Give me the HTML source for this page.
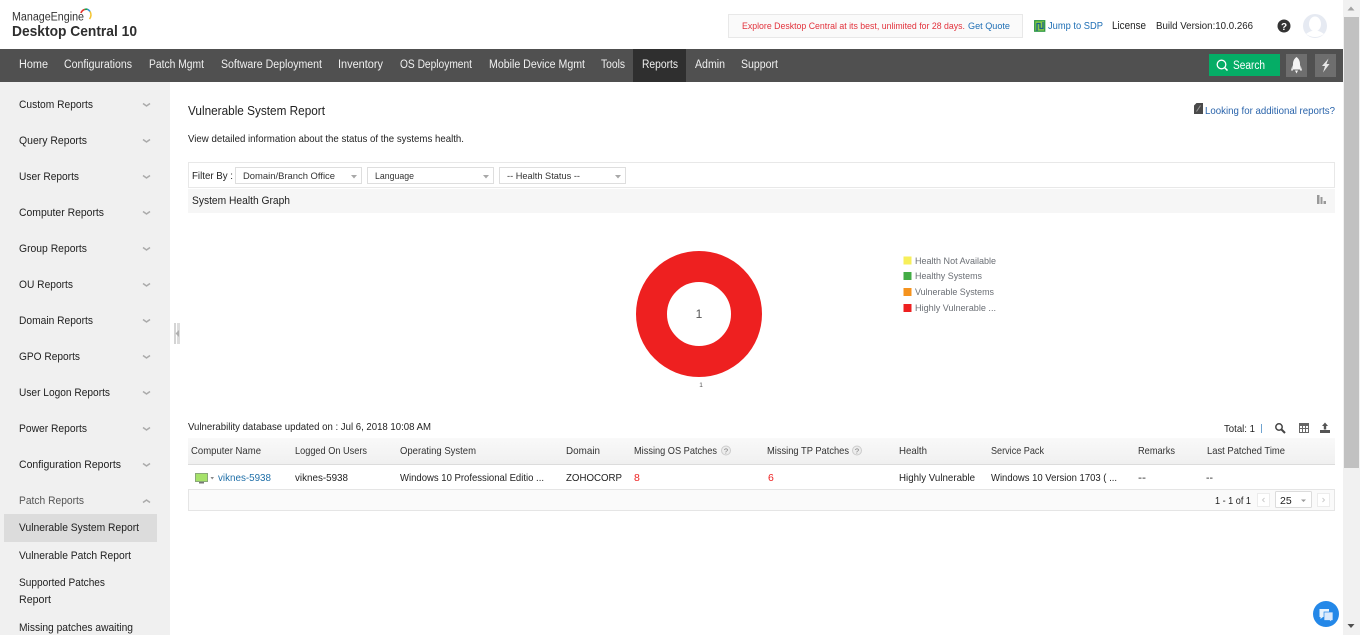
<!DOCTYPE html>
<html lang="en"><head><meta charset="utf-8"><title>Vulnerable System Report</title>
<style>
html,body{margin:0;padding:0;width:1360px;height:635px;overflow:hidden;background:#fff}
svg{display:block;position:absolute;left:0;top:0}
text{font-family:"Liberation Sans",sans-serif;font-size:11px;fill:#222;white-space:pre}
.n text{fill:#f0f0f0;font-size:11.5px}
.s text{fill:#222;font-size:11px}
.h text{fill:#333;font-size:10.5px}
.r text{fill:#222;font-size:10.5px}
.l text{fill:#6b6f75;font-size:9px}
.f text{fill:#333;font-size:9.5px}
.c path{fill:none;stroke:#aaa;stroke-width:1.5}
</style></head><body>
<svg width="1360" height="635" viewBox="0 0 1360 635" xmlns="http://www.w3.org/2000/svg">
<defs><linearGradient id="g" x1="0" y1="0" x2="0" y2="1"><stop offset="0" stop-color="#f9f9f9"/><stop offset="1" stop-color="#f0f0f0"/></linearGradient></defs>
<rect width="1360" height="635" fill="#fff"/>

<!-- header -->
<text x="12" y="20.5" textLength="72" lengthAdjust="spacingAndGlyphs" style="font-size:11.5px;fill:#333">ManageEngine</text>
<g fill="none" stroke-width="1.6">
<path d="M81 13A5.500 5.500 0 0 1 84.500 9.500" stroke="#e5322d"/>
<path d="M84.500 9.500A6 6 0 0 1 87.500 9.300" stroke="#1f9e4a"/>
<path d="M87.500 9.300A6 6 0 0 1 90 11.500" stroke="#2a8fd8"/>
<path d="M90 11.500A6.500 6.500 0 0 1 89.500 19" stroke="#f4c430"/>
</g>
<text x="12" y="36" textLength="125" lengthAdjust="spacingAndGlyphs" style="font-size:15px;font-weight:bold;fill:#2e2e2e">Desktop Central 10</text>

<rect x="728.500" y="14.500" width="294" height="23" fill="#fafafa" stroke="#e8e8e8"/>
<text x="742" y="29" textLength="223" lengthAdjust="spacingAndGlyphs" style="font-size:9.500px;fill:#e2323c">Explore Desktop Central at its best, unlimited for 28 days.</text>
<text x="968" y="29" textLength="42" lengthAdjust="spacingAndGlyphs" style="font-size:9.500px;fill:#1f6fb5">Get Quote</text>

<g fill="none" stroke-width="1.300"><rect x="1034.700" y="20.700" width="10" height="10.500" fill="#8ccc45" stroke="#2f9a46"/><path d="M1037 31V23.500H1040V28.500H1043V22" stroke="#14618c"/></g>
<text x="1048" y="29" textLength="55" lengthAdjust="spacingAndGlyphs" style="font-size:10.500px;fill:#1f6fb5">Jump to SDP</text>
<text x="1112" y="29" textLength="34" lengthAdjust="spacingAndGlyphs" style="font-size:11px;fill:#222">License</text>
<text x="1156" y="29" textLength="97" lengthAdjust="spacingAndGlyphs" style="font-size:10.500px;fill:#222">Build Version:10.0.266</text>
<circle cx="1284" cy="26" r="6.500" fill="#333"/>
<text x="1284" y="30" text-anchor="middle" style="font-size:10px;font-weight:bold;fill:#fff">?</text>
<circle cx="1315" cy="26" r="12" fill="#e6eaf2"/>
<ellipse cx="1315" cy="24" rx="6" ry="7.500" fill="#fff"/>
<path d="M1306 34Q1315 27 1324 34Q1315 40 1306 34Z" fill="#fff"/>

<!-- nav -->
<rect x="0" y="49" width="1343" height="33" fill="#505050"/>
<rect x="633" y="49" width="53" height="33" fill="#2f2f2f"/>
<g class="n">
<text x="19" y="68" textLength="29" lengthAdjust="spacingAndGlyphs">Home</text>
<text x="64" y="68" textLength="68" lengthAdjust="spacingAndGlyphs">Configurations</text>
<text x="149" y="68" textLength="55" lengthAdjust="spacingAndGlyphs">Patch Mgmt</text>
<text x="221" y="68" textLength="101" lengthAdjust="spacingAndGlyphs">Software Deployment</text>
<text x="338" y="68" textLength="45" lengthAdjust="spacingAndGlyphs">Inventory</text>
<text x="400" y="68" textLength="72" lengthAdjust="spacingAndGlyphs">OS Deployment</text>
<text x="489" y="68" textLength="96" lengthAdjust="spacingAndGlyphs">Mobile Device Mgmt</text>
<text x="601" y="68" textLength="24" lengthAdjust="spacingAndGlyphs">Tools</text>
<text x="642" y="68" textLength="36" lengthAdjust="spacingAndGlyphs">Reports</text>
<text x="695" y="68" textLength="30" lengthAdjust="spacingAndGlyphs">Admin</text>
<text x="741" y="68" textLength="37" lengthAdjust="spacingAndGlyphs">Support</text>
</g>
<rect x="1209" y="54" width="71" height="22" fill="#05ad66"/>
<circle cx="1221.500" cy="64.500" r="4.300" fill="none" stroke="#fff" stroke-width="1.300"/>
<path d="M1224.500 67.500L1227.500 70.500" stroke="#fff" stroke-width="1.500"/>
<text x="1233" y="69" textLength="32" lengthAdjust="spacingAndGlyphs" style="font-size:11.500px;fill:#fff">Search</text>
<rect x="1286" y="54" width="21" height="23" fill="#6e6e6e"/>
<path d="M1296.500 57C1299.200 59 1300 61.500 1300 64V69.500H1293V64C1293 61.500 1293.800 59 1296.500 57ZM1292.500 65L1291 70.500H1293ZM1300.500 65L1302 70.500H1300ZM1295 70.500H1298L1296.500 73.500Z" fill="#f4f4f4"/>
<rect x="1315" y="54" width="21" height="23" fill="#6e6e6e"/>
<path d="M1328.500 58.500L1322 66H1325L1323 72.500L1329.500 64H1326.500Z" fill="#e8e8e8"/>

<!-- sidebar -->
<rect x="0" y="82" width="170" height="553" fill="#f0f0f0"/>
<rect x="4" y="514" width="153" height="28" fill="#dcdcdc"/>
<g class="s">
<text x="19" y="108" textLength="74" lengthAdjust="spacingAndGlyphs">Custom Reports</text>
<text x="19" y="144" textLength="68" lengthAdjust="spacingAndGlyphs">Query Reports</text>
<text x="19" y="180" textLength="60" lengthAdjust="spacingAndGlyphs">User Reports</text>
<text x="19" y="216" textLength="85" lengthAdjust="spacingAndGlyphs">Computer Reports</text>
<text x="19" y="252" textLength="68" lengthAdjust="spacingAndGlyphs">Group Reports</text>
<text x="19" y="288" textLength="54" lengthAdjust="spacingAndGlyphs">OU Reports</text>
<text x="19" y="324" textLength="74" lengthAdjust="spacingAndGlyphs">Domain Reports</text>
<text x="19" y="360" textLength="61" lengthAdjust="spacingAndGlyphs">GPO Reports</text>
<text x="19" y="396" textLength="91" lengthAdjust="spacingAndGlyphs">User Logon Reports</text>
<text x="19" y="432" textLength="68" lengthAdjust="spacingAndGlyphs">Power Reports</text>
<text x="19" y="468" textLength="102" lengthAdjust="spacingAndGlyphs">Configuration Reports</text>
<text x="19" y="504" textLength="65" lengthAdjust="spacingAndGlyphs" style="fill:#555">Patch Reports</text>
<text x="19" y="531" textLength="120" lengthAdjust="spacingAndGlyphs">Vulnerable System Report</text>
<text x="19" y="559" textLength="112" lengthAdjust="spacingAndGlyphs">Vulnerable Patch Report</text>
<text x="19" y="586" textLength="86" lengthAdjust="spacingAndGlyphs">Supported Patches</text>
<text x="19" y="603" textLength="32" lengthAdjust="spacingAndGlyphs">Report</text>
<text x="19" y="631" textLength="114" lengthAdjust="spacingAndGlyphs">Missing patches awaiting</text>
</g>
<g class="c">
<path d="M143 103.500L146.500 106L150 103.500"/>
<path d="M143 139.500L146.500 142L150 139.500"/>
<path d="M143 175.500L146.500 178L150 175.500"/>
<path d="M143 211.500L146.500 214L150 211.500"/>
<path d="M143 247.500L146.500 250L150 247.500"/>
<path d="M143 283.500L146.500 286L150 283.500"/>
<path d="M143 319.500L146.500 322L150 319.500"/>
<path d="M143 355.500L146.500 358L150 355.500"/>
<path d="M143 391.500L146.500 394L150 391.500"/>
<path d="M143 427.500L146.500 430L150 427.500"/>
<path d="M143 463.500L146.500 466L150 463.500"/>
<path d="M143 502.500L146.500 500L150 502.500"/>
</g>
<rect x="174" y="323" width="2" height="21" fill="#d4d4d4"/>
<rect x="177" y="323" width="3" height="21" fill="#dcdcdc"/>
<path d="M179 330L175.500 333.500L179 337Z" fill="#b0b0b0"/>

<!-- content heading -->
<text x="188" y="115" textLength="137" lengthAdjust="spacingAndGlyphs" style="font-size:12.500px;fill:#222">Vulnerable System Report</text>
<text x="188" y="142" textLength="276" lengthAdjust="spacingAndGlyphs" style="font-size:10.500px;fill:#222">View detailed information about the status of the systems health.</text>
<path d="M1194 105.500L1196.500 103H1203V114H1194Z" fill="#4a4a4a"/>
<path d="M1196.500 111.500L1200.500 105.500" stroke="#999" stroke-width="1"/>
<text x="1205" y="114" textLength="130" lengthAdjust="spacingAndGlyphs" style="font-size:10.500px;fill:#2a64ab">Looking for additional reports?</text>

<!-- filter -->
<rect x="188.500" y="162.500" width="1146" height="25" fill="#fff" stroke="#e8e8e8"/>
<text x="192" y="179" textLength="41" lengthAdjust="spacingAndGlyphs" style="font-size:10.500px;fill:#222">Filter By :</text>
<rect x="235.500" y="167.500" width="126" height="16" fill="#fff" stroke="#dedede"/>
<rect x="367.500" y="167.500" width="126" height="16" fill="#fff" stroke="#dedede"/>
<rect x="499.500" y="167.500" width="126" height="16" fill="#fff" stroke="#dedede"/>
<g class="f">
<text x="243" y="179" textLength="92" lengthAdjust="spacingAndGlyphs">Domain/Branch Office</text>
<text x="375" y="179" textLength="39" lengthAdjust="spacingAndGlyphs">Language</text>
<text x="507" y="179" textLength="73" lengthAdjust="spacingAndGlyphs">-- Health Status --</text>
</g>
<path d="M351 175H357L354 178.500Z M483 175H489L486 178.500Z M615 175H621L618 178.500Z" fill="#a8a8a8"/>
<rect x="188" y="189" width="1147" height="24" fill="#f6f6f6"/>
<text x="192" y="204" textLength="98" lengthAdjust="spacingAndGlyphs" style="font-size:11px;fill:#222">System Health Graph</text>
<path d="M1317 204V195H1319.500V204ZM1320.500 204V197H1322.500V204ZM1323.500 204V201H1326V204Z" fill="#999"/>

<!-- donut -->
<circle cx="699" cy="314" r="47.500" fill="none" stroke="#ee2020" stroke-width="31"/>
<text x="699" y="318" text-anchor="middle" style="font-size:12px;fill:#555">1</text>
<text x="701" y="387" text-anchor="middle" style="font-size:6.500px;fill:#555">1</text>
<rect x="903.500" y="256.500" width="8" height="8" fill="#f7ef5a"/>
<rect x="903.500" y="272" width="8" height="8" fill="#43ac45"/>
<rect x="903.500" y="288" width="8" height="8" fill="#f5931e"/>
<rect x="903.500" y="304" width="8" height="8" fill="#ee2020"/>
<g class="l">
<text x="915" y="264" textLength="81" lengthAdjust="spacingAndGlyphs">Health Not Available</text>
<text x="915" y="279" textLength="67" lengthAdjust="spacingAndGlyphs">Healthy Systems</text>
<text x="915" y="295" textLength="79" lengthAdjust="spacingAndGlyphs">Vulnerable Systems</text>
<text x="915" y="311" textLength="81" lengthAdjust="spacingAndGlyphs">Highly Vulnerable ...</text>
</g>

<!-- toolbar -->
<text x="188" y="430" textLength="243" lengthAdjust="spacingAndGlyphs" style="font-size:10.500px;fill:#222">Vulnerability database updated on : Jul 6, 2018 10:08 AM</text>
<text x="1224" y="432" textLength="31" lengthAdjust="spacingAndGlyphs" style="font-size:10.500px;fill:#222">Total: 1</text>
<rect x="1261" y="424" width="1" height="9" fill="#6fa3d0"/>
<circle cx="1279" cy="427" r="3.200" fill="none" stroke="#444" stroke-width="1.500"/>
<path d="M1281.500 429.500L1285 433" stroke="#444" stroke-width="2"/>
<rect x="1299.500" y="423.500" width="9" height="9" fill="#fff" stroke="#666"/>
<path d="M1299.500 425.500H1308.500V423.500H1299.500ZM1299.500 428.500H1308.500M1302.500 425V432.500M1305.500 425V432.500" stroke="#666" stroke-width="1" fill="#666"/>
<path d="M1325 422.500L1328 426H1326.200V429.500H1323.800V426H1322ZM1320 430H1330V433H1320Z" fill="#555"/>

<!-- table -->
<rect x="188" y="438" width="1147" height="26" fill="url(#g)"/>
<rect x="188" y="464" width="1147" height="1" fill="#dcdcdc"/>
<g class="h">
<text x="191" y="454" textLength="70" lengthAdjust="spacingAndGlyphs">Computer Name</text>
<text x="295" y="454" textLength="72" lengthAdjust="spacingAndGlyphs">Logged On Users</text>
<text x="400" y="454" textLength="76" lengthAdjust="spacingAndGlyphs">Operating System</text>
<text x="566" y="454" textLength="34" lengthAdjust="spacingAndGlyphs">Domain</text>
<text x="634" y="454" textLength="83" lengthAdjust="spacingAndGlyphs">Missing OS Patches</text>
<text x="767" y="454" textLength="82" lengthAdjust="spacingAndGlyphs">Missing TP Patches</text>
<text x="899" y="454" textLength="28" lengthAdjust="spacingAndGlyphs">Health</text>
<text x="991" y="454" textLength="53" lengthAdjust="spacingAndGlyphs">Service Pack</text>
<text x="1138" y="454" textLength="37" lengthAdjust="spacingAndGlyphs">Remarks</text>
<text x="1207" y="454" textLength="78" lengthAdjust="spacingAndGlyphs">Last Patched Time</text>
</g>
<circle cx="726" cy="450.500" r="4.500" fill="#ececec" stroke="#ccc"/>
<text x="726" y="453.500" text-anchor="middle" style="font-size:7.500px;fill:#777">?</text>
<circle cx="857" cy="450.500" r="4.500" fill="#ececec" stroke="#ccc"/>
<text x="857" y="453.500" text-anchor="middle" style="font-size:7.500px;fill:#777">?</text>

<rect x="195.500" y="473.500" width="12" height="8" fill="#a6e26a" stroke="#8aa878"/>
<rect x="199" y="482" width="5" height="1.500" fill="#777"/>
<path d="M210.500 477H214L212.200 479.500Z" fill="#888"/>
<g class="r">
<text x="218" y="481" textLength="53" lengthAdjust="spacingAndGlyphs" style="fill:#1f6fa8">viknes-5938</text>
<text x="295" y="481" textLength="53" lengthAdjust="spacingAndGlyphs">viknes-5938</text>
<text x="400" y="481" textLength="144" lengthAdjust="spacingAndGlyphs">Windows 10 Professional Editio ...</text>
<text x="566" y="481" textLength="56" lengthAdjust="spacingAndGlyphs">ZOHOCORP</text>
<text x="634" y="481" style="fill:#ee2020">8</text>
<text x="768" y="481" style="fill:#ee2020">6</text>
<text x="899" y="481" textLength="76" lengthAdjust="spacingAndGlyphs">Highly Vulnerable</text>
<text x="991" y="481" textLength="126" lengthAdjust="spacingAndGlyphs">Windows 10 Version 1703 ( ...</text>
<text x="1138" y="481" textLength="8" lengthAdjust="spacingAndGlyphs">--</text>
<text x="1206" y="481" textLength="7" lengthAdjust="spacingAndGlyphs">--</text>
</g>

<rect x="188.500" y="489.500" width="1146" height="21" fill="#fafafa" stroke="#e5e5e5"/>
<text x="1215" y="504" textLength="36" lengthAdjust="spacingAndGlyphs" style="font-size:10.500px;fill:#222">1 - 1 of 1</text>
<rect x="1257.500" y="493.500" width="12" height="13" fill="#fff" stroke="#ececec"/>
<path d="M1264.500 498L1262.500 500L1264.500 502" fill="none" stroke="#ccc"/>
<rect x="1275.500" y="491.500" width="36" height="16" rx="1" fill="#fff" stroke="#dcdcdc"/>
<text x="1280" y="504" style="font-size:10.500px;fill:#222">25</text>
<path d="M1301 499.500H1306L1303.500 502Z" fill="#999"/>
<rect x="1317.500" y="493.500" width="12" height="13" fill="#fff" stroke="#ececec"/>
<path d="M1322.500 498L1324.500 500L1322.500 502" fill="none" stroke="#ccc"/>

<!-- chat -->
<circle cx="1326" cy="614" r="13" fill="#2488e8"/>
<path d="M1319.500 609H1329V617H1323L1320.500 619V617H1319.500Z" fill="#fff" opacity=".9"/>
<path d="M1324 612H1333V620.500H1331.500V622L1329.500 620.500H1324Z" fill="#dbe9fb" stroke="#2488e8" stroke-width=".7"/>

<!-- scrollbar -->
<rect x="1343" y="0" width="17" height="635" fill="#f1f1f1"/>
<rect x="1344" y="17" width="15" height="451" fill="#c1c1c1"/>
<path d="M1347.500 10.500H1354.500L1351 6.500Z" fill="#a3a3a3"/>
<path d="M1347.500 624H1354.500L1351 628Z" fill="#505050"/>
</svg>
</body></html>
